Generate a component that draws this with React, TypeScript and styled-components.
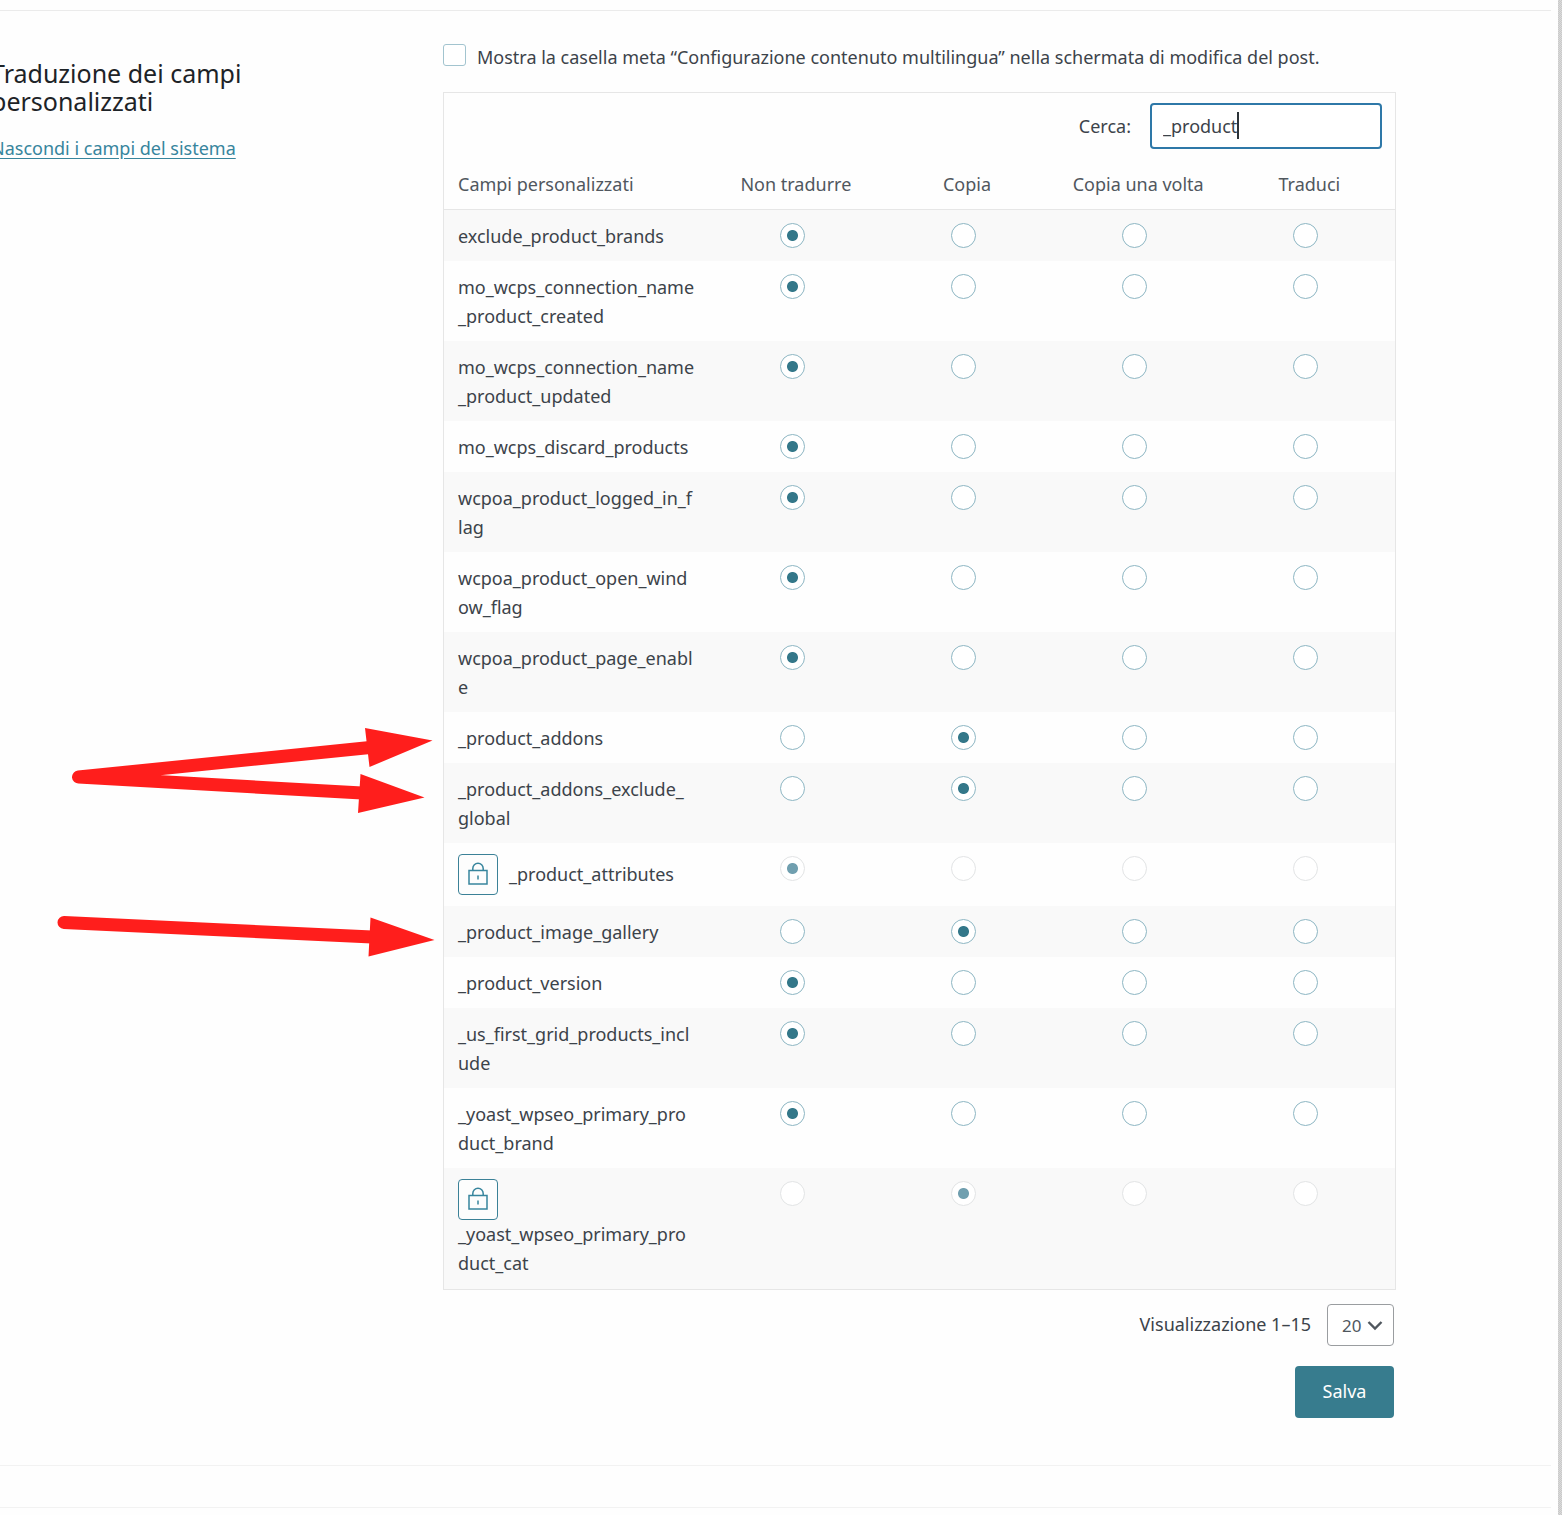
import React, { useState } from "react";
import styled, { createGlobalStyle } from "styled-components";

const GlobalStyle = createGlobalStyle`
  *, *::before, *::after { box-sizing: border-box; }
  html, body { margin: 0; min-height: 100%; }
  body {
    background: #fefefe;
    color: #3c434a;
    font-family: "Noto Sans", "Open Sans", sans-serif;
    font-size: 18px;
    line-height: 29px;
    overflow-x: hidden;
  }
  button, input, select { font: inherit; color: inherit; }
`;

const Page = styled.div`
  position: relative;
  display: grid;
  grid-template-columns: minmax(0, 1fr) 4px;
  min-height: 100vh;
`;

const Edge = styled.div`
  background: repeating-conic-gradient(#c9c9c9 0 25%, #dadada 0 50%) 0 0 / 2px 2px;
`;

const Sheet = styled.div`
  padding: 10px 7px 6px 0;
`;

const Section = styled.section`
  display: grid;
  grid-template-columns: 443px minmax(0, 1fr);
  border-top: 1px solid #ebebeb;
  border-bottom: 1px solid #f2f2f2;
  padding: 32px 155px 47px 0;
`;

const NextSection = styled.div`
  height: 42px;
  border-bottom: 1px solid #f2f2f2;
`;

const Aside = styled.aside`
  margin-left: -9px;
  padding-top: 16px;
`;

const Title = styled.h2`
  margin: 0 0 19px;
  width: 300px;
  color: #1d2327;
  font-size: 25px;
  font-weight: 400;
  line-height: 28px;
`;

const SystemLink = styled.a`
  color: #37859d;
  text-decoration: underline;
  text-underline-offset: 3px;
`;

const MetaOption = styled.div`
  display: flex;
  align-items: flex-start;
  gap: 11px;
  margin-bottom: 20px;
`;

const Checkbox = styled.input`
  appearance: none;
  flex: none;
  width: 23px;
  height: 22px;
  margin: 1px 0 0;
  border: 1px solid #a2c4cf;
  border-radius: 3px;
  background: #fff;
`;

const Panel = styled.div`
  border: 1px solid #e6e6e6;
  margin-bottom: 14px;
`;

const SearchBar = styled.div`
  display: flex;
  justify-content: flex-end;
  align-items: center;
  gap: 19px;
  padding: 10px 13px 10px;
`;

const SearchField = styled.div`
  position: relative;
  width: 232px;
`;

const SearchInput = styled.input`
  display: block;
  width: 100%;
  height: 46px;
  padding: 0 11px;
  border: 2px solid #2e78a8;
  border-radius: 4px;
  background: #fff;
  outline: none;
  caret-color: transparent;
`;

const Caret = styled.span`
  position: absolute;
  top: 9px;
  left: 87px;
  width: 2px;
  height: 27px;
  background: #2c3338;
`;

const Table = styled.table`
  width: 100%;
  table-layout: fixed;
  border-collapse: collapse;
`;

const HeadCell = styled.th<{ $name?: boolean }>`
  width: ${(p) => (p.$name ? "28%" : "18%")};
  height: 50px;
  padding: 2px 0 0 ${(p) => (p.$name ? "14px" : "0")};
  border-bottom: 1px solid #e6e6e6;
  color: #50575e;
  font-weight: 400;
  text-align: ${(p) => (p.$name ? "left" : "center")};
`;

const Row = styled.tr`
  &:nth-child(odd) { background: #f9f9f9; }
`;

const NameCell = styled.th<{ $locked?: boolean }>`
  padding: ${(p) => (p.$locked ? "11px 0 11px 14px" : "12px 0 10px 14px")};
  font-weight: 400;
  text-align: left;
  vertical-align: top;
`;

const NameLayout = styled.div<{ $stacked?: boolean }>`
  display: flex;
  flex-direction: ${(p) => (p.$stacked ? "column" : "row")};
  align-items: ${(p) => (p.$stacked ? "flex-start" : "center")};
  column-gap: 11px;
`;

const FieldName = styled.span`
  white-space: pre-line;
`;

const LockButton = styled.button`
  display: flex;
  align-items: center;
  justify-content: center;
  width: 40px;
  height: 41px;
  padding: 0;
  border: 1px solid #3b8197;
  border-radius: 4px;
  background: #fdfdfd;
  color: #37859d;
`;

const ChoiceCell = styled.td`
  padding: 13px 7px 0 0;
  text-align: center;
  vertical-align: top;
`;

const Radio = styled.input`
  appearance: none;
  display: block;
  width: 25px;
  height: 25px;
  margin: 0 auto;
  border: 1px solid #8db6c3;
  border-radius: 50%;
  background: #fff;

  &:checked {
    background: radial-gradient(circle at center, #337789 0 5px, #fff 6px);
  }
  &:disabled {
    border-color: #e2e4e5;
  }
  &:disabled:checked {
    background: radial-gradient(circle at center, #709faf 0 5px, #fff 6px);
  }
`;

const Footer = styled.div`
  display: flex;
  justify-content: flex-end;
  align-items: center;
  gap: 16px;
  padding-right: 2px;
  margin-bottom: 20px;
`;

const PerPage = styled.div`
  position: relative;
  width: 67px;
  height: 42px;
  color: #50575e;
`;

const Select = styled.select`
  appearance: none;
  width: 100%;
  height: 100%;
  padding: 2px 0 0 14px;
  border: 1px solid #9a9da0;
  border-radius: 4px;
  background: #fff;
  font-size: 17px;
`;

const Chevron = styled.svg`
  position: absolute;
  top: 16px;
  right: 11px;
  pointer-events: none;
`;

const Actions = styled.div`
  display: flex;
  justify-content: flex-end;
  padding-right: 2px;
`;

const SaveButton = styled.button`
  width: 99px;
  height: 52px;
  padding: 0;
  border: 0;
  border-radius: 4px;
  background: #377c8e;
  color: #fff;
`;

const Arrows = styled.svg`
  position: absolute;
  top: 720px;
  left: 50px;
  pointer-events: none;
`;

const choices = ["Non tradurre", "Copia", "Copia una volta", "Traduci"];

type Field = { name: string; choice: number; locked?: boolean; stacked?: boolean };

const fields: Field[] = [
  { name: "exclude_product_brands", choice: 0 },
  { name: "mo_wcps_connection_name\n_product_created", choice: 0 },
  { name: "mo_wcps_connection_name\n_product_updated", choice: 0 },
  { name: "mo_wcps_discard_products", choice: 0 },
  { name: "wcpoa_product_logged_in_f\nlag", choice: 0 },
  { name: "wcpoa_product_open_wind\now_flag", choice: 0 },
  { name: "wcpoa_product_page_enabl\ne", choice: 0 },
  { name: "_product_addons", choice: 1 },
  { name: "_product_addons_exclude_\nglobal", choice: 1 },
  { name: "_product_attributes", choice: 0, locked: true },
  { name: "_product_image_gallery", choice: 1 },
  { name: "_product_version", choice: 0 },
  { name: "_us_first_grid_products_incl\nude", choice: 0 },
  { name: "_yoast_wpseo_primary_pro\nduct_brand", choice: 0 },
  { name: "_yoast_wpseo_primary_pro\nduct_cat", choice: 1, locked: true, stacked: true },
];

function LockIcon() {
  return (
    <svg width="22" height="24" viewBox="0 0 22 24" fill="none" stroke="currentColor" aria-hidden="true">
      <rect x="2" y="8.5" width="18" height="13.500" strokeWidth="1.5" />
      <path d="M5.800 8.500V6.500a5.200 5.200 0 0 1 10.400 0V8.500" strokeWidth="1.5" />
      <path d="M11 13.500v4" strokeWidth="1.5" />
    </svg>
  );
}

function FieldRow({ field }: { field: Field }) {
  const id = field.name.replace("\n", "");
  return (
    <Row>
      <NameCell scope="row" $locked={field.locked}>
        <NameLayout $stacked={field.stacked}>
          {field.locked && (
            <LockButton type="button" aria-label="Sblocca">
              <LockIcon />
            </LockButton>
          )}
          <FieldName>{field.name}</FieldName>
        </NameLayout>
      </NameCell>
      {choices.map((choice, i) => (
        <ChoiceCell key={choice}>
          <Radio
            type="radio"
            name={id}
            aria-label={`${id}: ${choice}`}
            defaultChecked={field.choice === i}
            disabled={field.locked}
          />
        </ChoiceCell>
      ))}
    </Row>
  );
}

export default function App() {
  const [query, setQuery] = useState("_product");
  return (
    <>
      <GlobalStyle />
      <Page>
        <Sheet>
          <Section>
            <Aside>
              <Title>Traduzione dei campi personalizzati</Title>
              <SystemLink href="#sistema">Nascondi i campi del sistema</SystemLink>
            </Aside>
            <main>
              <MetaOption>
                <Checkbox type="checkbox" id="meta-box" />
                <label htmlFor="meta-box">
                  Mostra la casella meta “Configurazione contenuto multilingua” nella schermata di modifica del post.
                </label>
              </MetaOption>
              <Panel>
                <SearchBar>
                  <label htmlFor="search">Cerca:</label>
                  <SearchField>
                    <SearchInput id="search" type="text" value={query} onChange={(e) => setQuery(e.target.value)} />
                    <Caret />
                  </SearchField>
                </SearchBar>
                <Table>
                  <thead>
                    <tr>
                      <HeadCell $name scope="col">Campi personalizzati</HeadCell>
                      {choices.map((choice) => (
                        <HeadCell key={choice} scope="col">{choice}</HeadCell>
                      ))}
                    </tr>
                  </thead>
                  <tbody>
                    {fields.map((field) => (
                      <FieldRow key={field.name} field={field} />
                    ))}
                  </tbody>
                </Table>
              </Panel>
              <Footer>
                <label htmlFor="per-page">Visualizzazione 1–15</label>
                <PerPage>
                  <Select id="per-page" defaultValue="20">
                    <option>20</option>
                    <option>50</option>
                    <option>100</option>
                  </Select>
                  <Chevron width="16" height="11" viewBox="0 0 16 11" fill="none" stroke="#50575e" strokeWidth="2.4">
                    <path d="M1.5 2l6.5 6.5L14.500 2" />
                  </Chevron>
                </PerPage>
              </Footer>
              <Actions>
                <SaveButton type="button">Salva</SaveButton>
              </Actions>
            </main>
          </Section>
          <NextSection />
        </Sheet>
        <Edge />
        <Arrows width="392" height="244" viewBox="50 720 392 244" fill="#ff1e1c" stroke="#ff1e1c" aria-hidden="true">
          <path d="M78.500 777L370 747.500M78.500 777L362 793M64 922.500L372 937" fill="none" strokeWidth="13" strokeLinecap="round" />
          <path d="M365 728l67.500 12.500L369.500 767zM360.500 774l64 23.500L358 813zM370.500 917.500l64 22.500L368.500 956.500z" stroke="none" />
        </Arrows>
      </Page>
    </>
  );
}
